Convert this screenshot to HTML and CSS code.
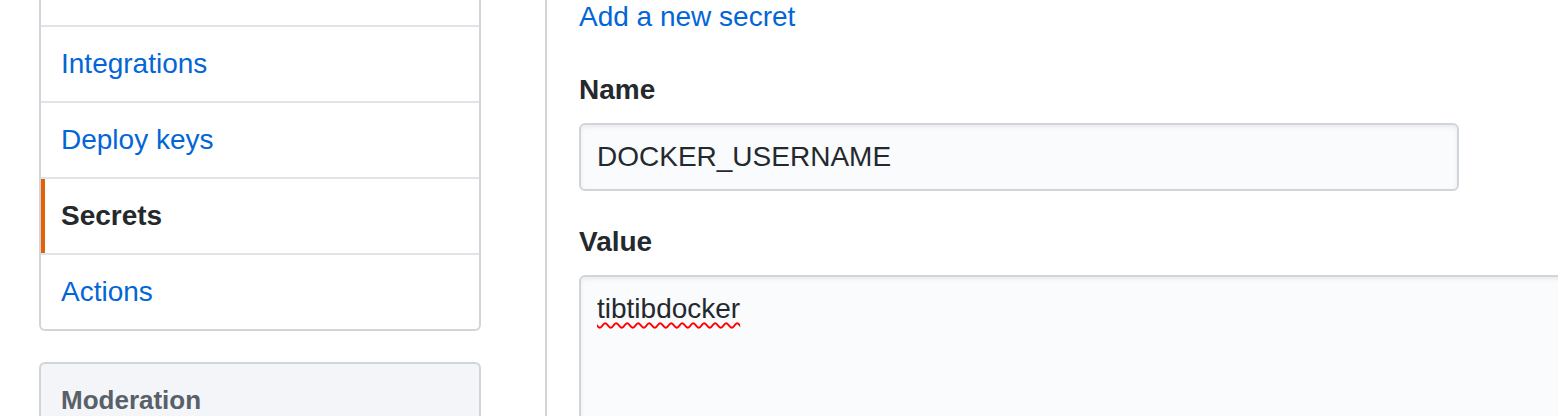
FILE: index.html
```html
<!DOCTYPE html>
<html lang="en">
<head>
<meta charset="utf-8">
<title>Secrets</title>
<link rel="stylesheet" href="styles.css">
</head>
<body>
<div class="layout">
  <aside class="sidebar">
    <nav class="menu menu-scrolled">
      <span class="menu-item menu-item-tail" aria-hidden="true"></span>
      <a class="menu-item" href="#">Integrations</a>
      <a class="menu-item" href="#">Deploy keys</a>
      <a class="menu-item selected" href="#">Secrets</a>
      <a class="menu-item" href="#">Actions</a>
    </nav>
    <nav class="menu menu-gray">
      <h3 class="menu-heading">Moderation</h3>
    </nav>
  </aside>
  <main class="main">
    <a class="add-link" href="#">Add a new secret</a>
    <form class="secret-form">
      <div class="form-group">
        <label class="form-label" for="name">Name</label>
        <input class="form-control input-name" id="name" type="text" value="DOCKER_USERNAME">
      </div>
      <div class="form-group">
        <label class="form-label">Value</label>
        <div class="form-control textarea" role="textbox"><span class="misspelled">tibtibdocker</span></div>
      </div>
    </form>
  </main>
</div>
</body>
</html>
```

FILE: styles.css
```css
* { box-sizing: border-box; }

html, body {
  margin: 0;
  padding: 0;
  overflow: hidden;
  background: #ffffff;
}

body {
  font-family: "Liberation Sans", Arial, Helvetica, sans-serif;
  font-size: 28px;
  line-height: 1.5;
  color: #24292e;
}

.layout {
  display: flex;
  align-items: stretch;
  padding-left: 39px;
  min-height: 470px;
}

.sidebar {
  flex: 0 0 442px;
  width: 442px;
  margin-right: 64px;
}

.menu {
  border: 2px solid #d1d5da;
  border-radius: 6px;
  margin-bottom: 31px;
  background: #ffffff;
  overflow: hidden;
}

.menu-scrolled {
  border-top: none;
  border-top-left-radius: 0;
  border-top-right-radius: 0;
}

.menu-item {
  position: relative;
  display: block;
  padding: 16px 20px;
  line-height: 42px;
  color: #0366d6;
  text-decoration: none;
  border-bottom: 2px solid #e1e4e8;
}

.menu-item-tail {
  height: 27px;
  padding: 0;
}

.menu-item:last-child { border-bottom: none; }

.menu-item.selected {
  font-weight: 700;
  color: #24292e;
}

.menu-item.selected::before {
  content: "";
  position: absolute;
  top: 0;
  bottom: 0;
  left: 0;
  width: 4px;
  background: #e36209;
}

.menu-gray { background: #f3f5f8; }

.menu-heading {
  margin: 0;
  padding: 16px 20px;
  font-size: 26px;
  line-height: 40px;
  font-weight: 700;
  color: #586069;
}

.main {
  flex: 1 1 auto;
  min-width: 0;
  border-left: 2px solid #d1d5da;
  padding-left: 32px;
}

.add-link {
  display: block;
  margin-top: -4px;
  color: #0366d6;
  text-decoration: none;
  line-height: 42px;
}

.secret-form { margin-top: 31px; }

.form-group { margin-bottom: 30px; }

.form-label {
  display: block;
  font-weight: 700;
  line-height: 42px;
  margin-bottom: 12px;
}

.form-control {
  display: block;
  font-family: inherit;
  font-size: 28px;
  line-height: 40px;
  color: #24292e;
  background: #fafbfc;
  border: 2px solid #d1d5da;
  border-radius: 6px;
  box-shadow: inset 0 2px 4px rgba(27, 31, 35, 0.075);
  padding: 12px 16px;
  outline: none;
}

.input-name {
  width: 880px;
  height: 68px;
}

.textarea {
  width: 1100px;
  min-height: 400px;
}

.misspelled {
  text-decoration: underline wavy #ff0000;
  text-decoration-thickness: 2px;
  text-underline-offset: 4px;
}
```
